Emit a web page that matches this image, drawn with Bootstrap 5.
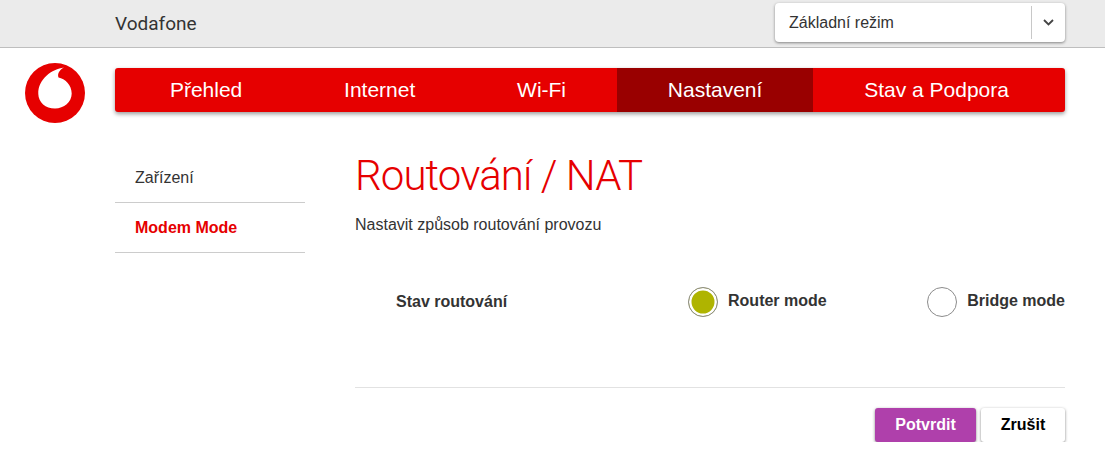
<!DOCTYPE html>
<html lang="cs">
<head>
  <meta charset="UTF-8" />
  <meta name="viewport" content="width=device-width, initial-scale=1" />
  <title>Vodafone - Routování / NAT</title>
  <link href="https://cdn.jsdelivr.net/npm/bootstrap@5.3.3/dist/css/bootstrap.min.css" rel="stylesheet" />
  <style>
    body {
      font-family: "Liberation Sans", Arial, sans-serif;
      color: #333;
      background: #fff;
      overflow: hidden;
    }
    .top-strip {
      height: 48px;
      background: #ebebeb;
      border-bottom: 1px solid #bebebe;
      padding: 3px 40px 0 115px;
    }
    .brand-name {
      font-family: "Roboto", sans-serif;
      font-size: 19px;
      line-height: 42px;
      color: #333;
    }
    .mode-select {
      width: 290px;
      height: 39px;
      background: #fff;
      border-radius: 4px;
      box-shadow: 0 1px 3px rgba(0, 0, 0, .45);
      font-size: 16px;
      padding: 3px 0 3px 14px;
    }
    .mode-arrow {
      width: 34px;
      height: 33px;
      border-left: 1px solid #c8c8c8;
    }
    .logo-col {
      width: 115px;
      padding: 15px 0 0 25px;
    }
    .main-menu {
      width: 950px;
      height: 44px;
      margin-top: 20px;
      padding-left: 4px;
      background: #e60000;
      border-radius: 3px;
      box-shadow: 0 2px 4px rgba(0, 0, 0, .4);
    }
    .main-menu .nav-link {
      padding: 0 50.9px;
      line-height: 44px;
      font-size: 21px;
      color: #fff;
    }
    .main-menu .nav-link.active {
      background: #990000;
      color: #fff;
    }
    .side-menu {
      width: 190px;
      margin-top: 41px;
    }
    .side-menu .list-group-item {
      height: 50px;
      padding: 15px 20px 0;
      font-size: 16px;
      line-height: 20px;
      color: #333;
      background: transparent;
      border-width: 0 0 1px;
      border-color: #ccc;
    }
    .side-menu .list-group-item.active {
      margin-top: 0;
      border-top-width: 0;
      color: #e60000;
      font-weight: 700;
    }
    .page-body {
      width: 710px;
      margin-left: 50px;
    }
    .page-title {
      font-family: "Roboto", sans-serif;
      font-weight: 300;
      font-size: 42px;
      letter-spacing: -.9px;
      line-height: 56px;
      color: #e60000;
      margin: 36px 0 0;
    }
    .page-lead {
      font-size: 16px;
      line-height: 20px;
      margin: 11px 0 0;
    }
    .mode-row {
      margin-top: 52px;
      height: 30px;
      padding-left: 41px;
      font-size: 16px;
      font-weight: 700;
    }
    .mode-row .form-check-input {
      width: 30px;
      height: 30px;
      margin: 0;
      background: #fff;
      border: 1px solid #8c8c8c;
      box-shadow: none;
    }
    .mode-row .form-check-input:checked {
      background: #afb400;
      border-color: #8c8c8c;
      box-shadow: inset 0 0 0 2.5px #fff;
    }
    .mode-row label {
      margin: 0 0 2px 10px;
    }
    .bridge-option {
      margin-left: 100.5px;
    }
    .form-rule {
      margin: 70px 0 20px;
      border-color: #e2e2e2;
      opacity: 1;
    }
    .btn-confirm, .btn-cancel {
      height: 34px;
      padding: 0;
      font-size: 16px;
      font-weight: 700;
      border: 0;
      border-radius: 3px;
      box-shadow: 0 1px 3px rgba(0, 0, 0, .5);
    }
    .btn-confirm {
      width: 101px;
      background: #af40ab;
      color: #fff;
    }
    .btn-cancel {
      width: 84px;
      margin-left: 5px;
      background: #fff;
      color: #000;
    }
  </style>
</head>
<body>
  <header class="top-strip d-flex justify-content-between">
    <div class="brand-name">Vodafone</div>
    <div class="mode-select d-flex align-items-center justify-content-between">
      <span>Základní režim</span>
      <span class="mode-arrow d-flex align-items-center justify-content-center">
        <svg width="11" height="7" viewBox="0 0 11 7"><path d="M1 1l4.5 4.5L10 1" fill="none" stroke="#444" stroke-width="1.8"/></svg>
      </span>
    </div>
  </header>

  <div class="d-flex">
    <div class="logo-col">
      <svg width="60" height="60" viewBox="0 0 60 60">
        <circle cx="30" cy="30" r="30" fill="#e60000"/>
        <path d="M39 4.5C27 6 13 16 13.3 31C13.5 39.5 20.5 45.5 30 45.5C39 45.5 46.7 39 46.7 30.5C46.7 22 40 15.5 33.5 14.5C32 10.5 35 6.5 39 4.5Z" fill="#fff"/>
      </svg>
    </div>
    <div>
      <ul class="main-menu nav">
        <li class="nav-item"><a class="nav-link" href="#">Přehled</a></li>
        <li class="nav-item"><a class="nav-link" href="#">Internet</a></li>
        <li class="nav-item"><a class="nav-link" href="#">Wi-Fi</a></li>
        <li class="nav-item"><a class="nav-link active" href="#">Nastavení</a></li>
        <li class="nav-item"><a class="nav-link" href="#">Stav a Podpora</a></li>
      </ul>
      <div class="d-flex">
        <div class="side-menu list-group rounded-0">
          <a class="list-group-item" href="#">Zařízení</a>
          <a class="list-group-item active" href="#">Modem Mode</a>
        </div>
        <main class="page-body">
          <h1 class="page-title">Routování / NAT</h1>
          <p class="page-lead">Nastavit způsob routování provozu</p>
          <div class="mode-row d-flex align-items-center">
            <div class="flex-grow-1">Stav routování</div>
            <div class="d-flex align-items-center">
              <input class="form-check-input" type="radio" name="mode" id="modeRouter" checked />
              <label for="modeRouter">Router mode</label>
            </div>
            <div class="bridge-option d-flex align-items-center">
              <input class="form-check-input" type="radio" name="mode" id="modeBridge" />
              <label for="modeBridge">Bridge mode</label>
            </div>
          </div>
          <hr class="form-rule" />
          <div class="d-flex justify-content-end">
            <button type="button" class="btn btn-confirm">Potvrdit</button>
            <button type="button" class="btn btn-cancel">Zrušit</button>
          </div>
        </main>
      </div>
    </div>
  </div>
  <script src="https://cdn.jsdelivr.net/npm/bootstrap@5.3.3/dist/js/bootstrap.bundle.min.js"></script>
</body>
</html>
